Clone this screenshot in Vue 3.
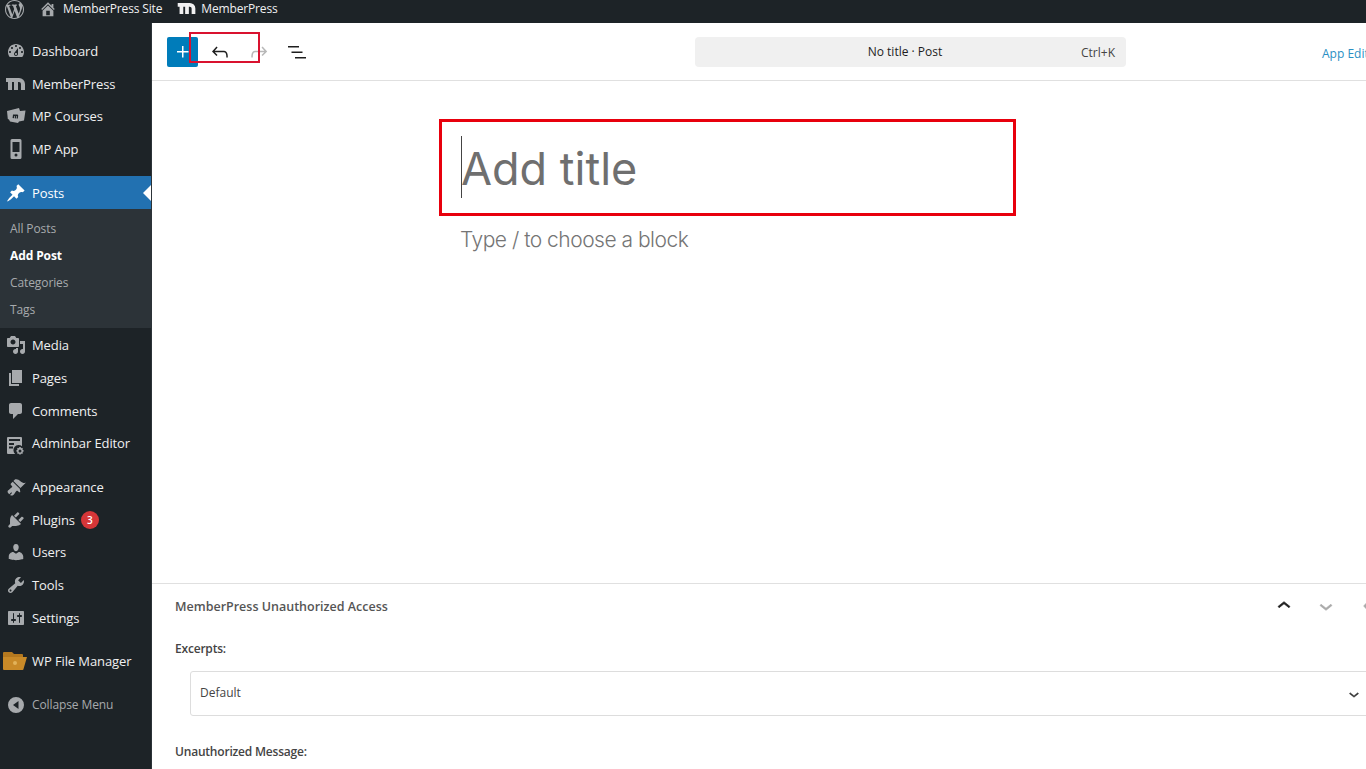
<script setup>
const P = {
  dashboard: 'M3.76 16h12.48c1.1-1.37 1.76-3.11 1.76-5 0-4.42-3.58-8-8-8s-8 3.58-8 8c0 1.89.66 3.63 1.76 5zM10 4c.55 0 1 .45 1 1s-.45 1-1 1-1-.45-1-1 .45-1 1-1zM6 6c.55 0 1 .45 1 1s-.45 1-1 1-1-.45-1-1 .45-1 1-1zm8 0c.55 0 1 .45 1 1s-.45 1-1 1-1-.45-1-1 .45-1 1-1zm-5.37 5.55L12 7v6c0 1.1-.9 2-2 2s-2-.9-2-2c0-.57.24-1.08.63-1.45zM4 10c.55 0 1 .45 1 1s-.45 1-1 1-1-.45-1-1 .45-1 1-1zm12 0c.55 0 1 .45 1 1s-.45 1-1 1-1-.45-1-1 .45-1 1-1zm-5 3c0-.55-.45-1-1-1s-1 .45-1 1 .45 1 1 1 1-.45 1-1z',
  member: 'M0 4h13a6 6 0 0 1 6 6v6h-4v-6a2 2 0 0 0-2-2h-1v8H8V8H6v8H2V8H0z',
  courses: 'M1 5l12-3 1 3 5.500-.5-1.500 10L13 15.500l-1 1.500-8-1.500L3 13.500l-1.200-.5zM7 8.500l-.4 3.500 1.300.2.3-2.300h.7l-.2 2.400 1.200.1.200-2.400h.7l-.2 2.500 1.300.1.300-3.300-.7-.8z',
  app: 'M6 0h8a1.500 1.500 0 0 1 1.500 1.500v17A1.500 1.500 0 0 1 14 20H6a1.500 1.500 0 0 1-1.500-1.500v-17A1.500 1.500 0 0 1 6 0zm.5 3v10h7V3zM10 14.500a1.500 1.500 0 1 0 0 3 1.500 1.500 0 0 0 0-3z',
  pin: 'M10.44 3.02l1.82-1.82 6.36 6.35-1.83 1.82c-1.05-.68-2.48-.57-3.41.36l-.75.75c-.92.93-1.04 2.35-.35 3.41l-1.83 1.82-2.41-2.41-2.8 2.79c-.42.42-3.38 2.71-3.8 2.29s1.86-3.39 2.28-3.81l2.79-2.79L4.1 9.36l1.83-1.82c1.05.69 2.48.57 3.4-.36l.75-.75c.93-.92 1.05-2.35.36-3.41z',
  media: 'M13 11V4c0-.55-.45-1-1-1h-1.67L9 1H5L3.67 3H2c-.55 0-1 .45-1 1v7c0 .55.45 1 1 1h10c.55 0 1-.45 1-1zM7 4.5c1.38 0 2.5 1.12 2.5 2.5S8.38 9.5 7 9.5 4.5 8.38 4.5 7 5.62 4.5 7 4.5zM14 6h5v10.5c0 1.38-1.12 2.5-2.5 2.5S14 17.88 14 16.5s1.12-2.5 2.5-2.5c.17 0 .34.02.5.05V9h-3V6zm-4 8.05V13h2v3.5c0 1.38-1.12 2.5-2.5 2.5S7 17.88 7 16.5 8.12 14 9.5 14c.17 0 .34.02.5.05z',
  pages: 'M6 15V2h10v13H6zm-1 1h8v2H3V5h2v11z',
  comments: 'M5 2h9c1.1 0 2 .9 2 2v7c0 1.1-.9 2-2 2h-2l-5 5v-5H5c-1.100 0-2-.9-2-2V4c0-1.100.9-2 2-2z',
  adminbar: 'M2 1h13a1 1 0 0 1 1 1v8.200a5 5 0 0 0-6.800 7.800H2a1 1 0 0 1-1-1V2a1 1 0 0 1 1-1zm1 2v2h11V3zm0 4v2h5V7zm0 3.500v2h4v-2zM13.300 11h1.400l.3 1.200 1-.4 1 1-.6 1 1.200.4v1.400l-1.200.3.6 1.100-1 1-1-.6-.3 1.200h-1.400l-.3-1.200-1 .6-1-1 .6-1.100-1.200-.3v-1.400l1.200-.4-.6-1 1-1 1 .4zm.7 2.500a1.500 1.500 0 1 0 0 3 1.500 1.500 0 0 0 0-3z',
  appearance: 'M14.48 11.06L7.41 3.99l1.5-1.5c.5-.56 2.3-.47 3.51.32 1.21.8 1.43 1.28 2.91 2.1 1.18.64 2.45 1.26 4.45.85zm-.71.71L6.7 4.7 4.93 6.47c-.39.39-.39 1.02 0 1.41l1.06 1.06c.39.39.39 1.03 0 1.42-.6.6-1.43 1.11-2.21 1.69-.35.26-.7.53-1.01.84C1.43 13.23.91 15 2.73 16.83c.18.18.37.36.56.52l1.8-1.8c.2-.2.51-.2.71 0s.2.51 0 .71l-1.71 1.71c1.76 1.14 3.29.48 4.67-1.8.52-.78 1.04-1.61 1.64-2.21.39-.39 1.03-.39 1.42 0l1.06 1.06c.39.39 1.02.39 1.41 0z',
  plugins: 'M13.11 4.36L9.87 7.6 8 5.73l3.24-3.24c.35-.34 1.05-.2 1.56.32.52.51.66 1.21.31 1.55zm-8 1.77l.91-1.12 9.01 9.01-1.19.84c-.71.71-2.63 1.16-3.82 1.16H6.14L4.9 17.26c-.59.59-1.54.59-2.12 0-.59-.58-.59-1.53 0-2.12l1.24-1.24v-3.88c0-1.13.4-3.19 1.09-3.89zm7.26 3.97l3.24-3.24c.34-.35 1.04-.21 1.55.31.52.51.66 1.21.31 1.55l-3.24 3.25z',
  users: 'M10 9.25c-2.27 0-2.73-3.44-2.73-3.44C7 4.02 7.82 2 9.97 2c2.16 0 2.98 2.02 2.71 3.81 0 0-.41 3.44-2.68 3.44zm0 2.57L12.72 10c2.39 0 4.52 2.33 4.52 4.53v2.49s-3.65 1.13-7.24 1.13c-3.65 0-7.24-1.13-7.24-1.13v-2.49c0-2.25 1.94-4.48 4.47-4.48z',
  tools: 'M16.68 9.77c-1.34 1.34-3.3 1.67-4.95.99l-5.41 6.52c-.99.99-2.59.99-3.58 0s-.99-2.59 0-3.57l6.52-5.42c-.68-1.65-.35-3.61.99-4.95 1.28-1.28 3.12-1.62 4.72-1.06l-2.89 2.89 2.82 2.82 2.86-2.87c.53 1.58.18 3.39-1.08 4.65zM3.81 16.21c.4.39 1.04.39 1.43 0 .4-.4.4-1.04 0-1.43-.39-.4-1.03-.4-1.43 0-.39.39-.39 1.03 0 1.43z',
  settings: 'M18 16V4c0-.55-.45-1-1-1H3c-.55 0-1 .45-1 1v12c0 .55.45 1 1 1h14c.55 0 1-.45 1-1zM8 11h1c.55 0 1 .45 1 1s-.45 1-1 1H8v1.500c0 .28-.22.5-.5.5s-.5-.22-.5-.5V13H6c-.55 0-1-.45-1-1s.45-1 1-1h1V5.500c0-.28.22-.5.5-.5s.5.22.5.5V11zm5-2h-1c-.55 0-1-.45-1-1s.45-1 1-1h1V5.500c0-.28.22-.5.5-.5s.5.22.5.5V7h1c.55 0 1 .45 1 1s-.45 1-1 1h-1v5.500c0 .28-.22.5-.5.5s-.5-.22-.5-.5V9z',
  collapse: 'M10 2a8 8 0 1 1 0 16 8 8 0 0 1 0-16zm2.500 4L7 10l5.500 4z',
}
const groups = [
  [
    { label: 'Dashboard', icon: P.dashboard },
    { label: 'MemberPress', icon: P.member },
    { label: 'MP Courses', icon: P.courses },
    { label: 'MP App', icon: P.app },
  ],
  [
    { label: 'Posts', icon: P.pin, current: true, sub: ['All Posts', 'Add Post', 'Categories', 'Tags'] },
    { label: 'Media', icon: P.media },
    { label: 'Pages', icon: P.pages },
    { label: 'Comments', icon: P.comments },
    { label: 'Adminbar Editor', icon: P.adminbar, low: true },
  ],
  [
    { label: 'Appearance', icon: P.appearance },
    { label: 'Plugins', icon: P.plugins, badge: 3 },
    { label: 'Users', icon: P.users },
    { label: 'Tools', icon: P.tools },
    { label: 'Settings', icon: P.settings },
  ],
]
</script>

<template>
  <div class="page">
    <header class="adminbar">
      <svg class="wp" viewBox="0 0 20 20"><path d="M20 10c0-5.510-4.490-10-10-10C4.480 0 0 4.490 0 10c0 5.520 4.480 10 10 10 5.510 0 10-4.480 10-10zM7.780 15.370L4.370 6.220c.55-.02 1.170-.08 1.170-.08.5-.06.44-1.130-.06-1.110 0 0-1.450.11-2.370.11-.18 0-.37 0-.58-.01C4.120 2.690 6.870 1.110 10 1.110c2.330 0 4.450.87 6.050 2.340-.68-.11-1.650.39-1.650 1.580 0 .74.45 1.360.9 2.100.35.61.55 1.360.55 2.460 0 1.490-1.400 5-1.400 5l-3.030-8.370c.54-.02.82-.17.82-.17.5-.05.44-1.250-.06-1.220 0 0-1.440.12-2.380.12-.87 0-2.330-.12-2.330-.12-.5-.03-.56 1.200-.06 1.220l.92.08 1.260 3.410zM17.410 10c.24-.64.74-1.870.43-4.250.7 1.290 1.050 2.710 1.050 4.250 0 3.290-1.730 6.240-4.400 7.780.97-2.590 1.940-5.200 2.920-7.780zM6.100 18.090C3.120 16.650 1.110 13.530 1.110 10c0-1.300.23-2.480.72-3.590C3.250 10.300 4.670 14.200 6.100 18.090zm4.030-6.630l2.580 6.980c-.86.29-1.760.45-2.710.45-.79 0-1.570-.11-2.290-.33.81-2.380 1.620-4.740 2.420-7.100z"/></svg>
      <svg class="home" viewBox="0 0 20 20"><path d="M16 8.500l1.530 1.530-1.060 1.060L10 4.620l-6.470 6.470-1.060-1.060L10 2.500l4 4v-2h2v4zm-6-2.460l6 5.990V18H4v-5.970zM12 17v-5H8v5h4z"/></svg>
      <span class="bar-text">MemberPress Site</span>
      <svg class="mp-logo" viewBox="0 3 20 14"><path :d="P.member"/></svg>
      <span class="bar-text">MemberPress</span>
    </header>

    <div class="body">
      <aside class="sidebar">
        <nav v-for="(group, g) in groups" :key="g" class="group">
          <template v-for="item in group" :key="item.label">
            <div class="item" :class="{ current: item.current }">
              <svg class="mi" :class="{ low: item.low }" viewBox="0 0 20 20"><path :d="item.icon"/></svg>
              <span>{{ item.label }}</span>
              <span v-if="item.badge" class="badge">{{ item.badge }}</span>
              <i v-if="item.current" class="notch"></i>
            </div>
            <ul v-if="item.sub" class="sub">
              <li v-for="s in item.sub" :key="s" :class="{ on: s === 'Add Post' }">{{ s }}</li>
            </ul>
          </template>
        </nav>
        <div class="item group">
          <svg class="mi folder" viewBox="0 0 24 20">
            <path fill="#b5791f" d="M0 2a1 1 0 0 1 1-1h8l2 2h8a1 1 0 0 1 1 1v3H0z"/>
            <path fill="#c98a28" d="M0 6h24l-3.500 12a1 1 0 0 1-1 1H1a1 1 0 0 1-1-1z"/>
            <circle cx="12" cy="12" r="2" fill="#e2b35a"/>
          </svg>
          <span>WP File Manager</span>
        </div>
        <div class="item group collapse">
          <svg class="mi" viewBox="0 0 20 20"><path :d="P.collapse"/></svg>
          <span>Collapse Menu</span>
        </div>
      </aside>

      <main class="main">
        <div class="toolbar">
          <button class="add">
            <svg viewBox="0 0 24 24"><path d="M11 12.500V17.500H12.500V12.500H17.500V11H12.500V6H11V11H6V12.500H11Z"/></svg>
          </button>
          <svg class="tool" viewBox="0 0 24 24"><path d="M18.300 11.700c-.6-.6-1.400-.9-2.300-.9H6.700l2.900-3.300-1.100-1-4.500 5L8.500 16l1-1-2.700-2.700H16c.5 0 .9.2 1.300.5 1 1 1 3.400 1 4.500v.3h1.500v-.2c0-1.500 0-4.300-1.500-5.700z"/></svg>
          <svg class="tool off" viewBox="0 0 24 24"><path d="M15.600 6.500l-1.100 1 2.900 3.300H8c-.9 0-1.700.3-2.300.9-1.400 1.500-1.400 4.200-1.400 5.600v.2h1.500v-.3c0-1.100 0-3.500 1-4.500.3-.3.7-.5 1.300-.5h9.200L14.500 15l1.100 1.100 4.600-4.600-4.600-5z"/></svg>
          <svg class="tool list" viewBox="0 0 24 24"><path d="M3 6h11v1.500H3V6zm3.500 5.500h11V13h-11v-1.500zM21 17H10v1.500h11V17z"/></svg>
          <div class="command">
            <span class="cmd-title">No title · Post</span>
            <span class="cmd-key">Ctrl+K</span>
          </div>
          <span class="app-edit">App Edit</span>
          <i class="mark-small"></i>
        </div>

        <section class="canvas">
          <div class="column">
            <div class="title-wrap">
              <i class="mark-large"></i>
              <h1 class="title"><i class="caret"></i>Add title</h1>
            </div>
            <p class="hint">Type / to choose a block</p>
          </div>
        </section>

        <section class="meta">
          <div class="meta-head">
            <h2>MemberPress Unauthorized Access</h2>
            <div class="meta-tools">
              <svg viewBox="0 0 24 24"><path d="M6.500 12.400L12 8l5.500 4.400-.9 1.200L12 10l-4.500 3.600-1-1.200z"/></svg>
              <svg class="off" viewBox="0 0 24 24"><path d="M17.500 11.600L12 16l-5.500-4.400.9-1.200L12 14l4.500-3.600 1 1.200z"/></svg>
              <svg class="off" viewBox="0 0 24 24"><path d="M14.600 7l-1.200-1L8 12l5.400 6 1.200-1-4.600-5z"/></svg>
            </div>
          </div>
          <label class="field">Excerpts:</label>
          <div class="select">
            <span>Default</span>
            <svg viewBox="0 0 24 24"><path d="M17.500 11.600L12 16l-5.500-4.400.9-1.200L12 14l4.500-3.600 1 1.200z"/></svg>
          </div>
          <label class="field second">Unauthorized Message:</label>
        </section>
      </main>
    </div>
  </div>
</template>

<style>
html, body { margin: 0; height: 100%; overflow: hidden; background: #fff; }
</style>

<style scoped>
.page {
  width: 1366px;
  height: 769px;
  display: flex;
  flex-direction: column;
  overflow: hidden;
  font-family: "Open Sans", "Noto Sans", sans-serif;
}
.adminbar {
  height: 23px;
  flex: none;
  background: #1d2327;
  display: flex;
  align-items: center;
  color: #f0f0f1;
  font-size: 12px;
  letter-spacing: -0.15px;
}
.adminbar svg { fill: #a7aaad; flex: none; }
.wp { width: 19px; height: 19px; margin-left: 5px; margin-top: -4px; }
.home { width: 18px; height: 18px; margin-left: 15px; margin-top: -5px; }
.bar-text { margin-top: -7px; white-space: nowrap; }
.home + .bar-text { margin-left: 6px; }
.adminbar .mp-logo { width: 20px; height: 13px; margin-left: 15px; margin-right: 4px; margin-top: -7px; fill: #f0f0f1; }

.body { flex: 1; display: flex; min-height: 0; }

.sidebar {
  width: 152px;
  flex: none;
  background: #1d2327;
  padding-top: 11.6px;
  box-sizing: border-box;
  color: #f0f0f1;
  font-size: 13px;
  letter-spacing: -0.1px;
  border-right: 1px solid #2c3338;
}
.group { margin-bottom: 10.9px; }
.item {
  position: relative;
  height: 32.67px;
  display: flex;
  align-items: center;
  white-space: nowrap;
}
.item > span:first-of-type { margin-left: 6px; }
.mi { width: 20px; height: 20px; margin-left: 6px; fill: #a7aaad; flex: none; }
.mi.low { transform: translateY(3px); }
.current { background: #2271b1; color: #fff; height: 33px; }
.current > span { padding-top: 1px; }
.current .mi { fill: #fff; }
.notch {
  position: absolute;
  right: 0;
  top: 9px;
  border: 8px solid transparent;
  border-right-color: #fff;
  border-left-width: 0;
}
.sub {
  list-style: none;
  margin: 0 0 1px;
  padding: 6px 0 0;
  background: #2c3338;
  height: 119px;
  box-sizing: border-box;
  color: #a7aaad;
  font-size: 12px;
}
.sub li { height: 27px; line-height: 27px; padding-left: 10px; }
.sub .on { color: #fff; font-weight: 700; }
.badge {
  margin-left: 6px;
  width: 18px;
  height: 18px;
  border-radius: 50%;
  background: #d63638;
  color: #fff;
  font-size: 10px;
  font-weight: 600;
  line-height: 18px;
  text-align: center;
}
.folder { width: 24px; height: 22px; margin-left: 3px; }
.item > .folder + span { margin-left: 5px; }
.collapse { color: #a7aaad; font-size: 12px; }

.main { flex: 1; min-width: 0; display: flex; flex-direction: column; background: #fff; }

.toolbar {
  position: relative;
  height: 58px;
  flex: none;
  box-sizing: border-box;
  border-bottom: 1px solid #e0e0e0;
  display: flex;
  align-items: center;
  padding-left: 15px;
  padding-top: 1px;
}
.add {
  width: 31px;
  height: 30px;
  padding: 0;
  border: 0;
  border-radius: 2px;
  background: #007cba;
  display: flex;
  align-items: center;
  justify-content: center;
}
.add svg { width: 24px; height: 24px; fill: #fff; }
.tool { width: 24px; height: 24px; fill: #1e1e1e; flex: none; margin-left: 15px; }
.add + .tool { margin-left: 10px; }
.tool.off { fill: #b8b8b8; }
.tool.list { margin-left: 14px; }
.command {
  position: absolute;
  left: 543px;
  top: 14px;
  width: 431px;
  height: 30px;
  box-sizing: border-box;
  padding-right: 11px;
  border-radius: 4px;
  background: #f0f0f0;
  display: flex;
  align-items: center;
  justify-content: center;
  font-size: 12px;
  color: #1e1e1e;
}
.cmd-title { margin-top: -2px; }
.cmd-key { position: absolute; right: 11px; color: #444; }
.app-edit {
  position: absolute;
  left: 1170px;
  top: 22px;
  font-size: 12px;
  color: #2a8fc4;
  white-space: nowrap;
}
.mark-small {
  position: absolute;
  left: 37px;
  top: 9px;
  width: 71px;
  height: 31px;
  box-sizing: border-box;
  border: 2px solid #d9122f;
  pointer-events: none;
}

.canvas { flex: 1; min-height: 0; }
.column { margin-left: 309px; width: 600px; padding-top: 38px; }
.title-wrap { position: relative; height: 97px; }
.title {
  position: relative;
  margin: 0;
  padding-top: 20px;
  font-family: Inter, sans-serif;
  font-size: 45px;
  font-weight: 400;
  line-height: 60px;
  color: #6f6f6f;
}
.caret {
  position: absolute;
  left: 0;
  top: 17px;
  width: 1px;
  height: 62px;
  background: #444;
}
.mark-large {
  position: absolute;
  left: -22px;
  top: 0;
  width: 577px;
  height: 97px;
  box-sizing: border-box;
  border: 3px solid #e8000d;
  pointer-events: none;
}
.hint {
  margin: 10px 0 0 -1px;
  font-family: Inter, sans-serif;
  font-size: 21px;
  font-weight: 300;
  letter-spacing: -0.5px;
  line-height: 28px;
  color: #757575;
}

.meta {
  height: 186px;
  flex: none;
  box-sizing: border-box;
  border-top: 1px solid #e0e0e0;
  padding-left: 23px;
  font-size: 12px;
  color: #444;
  overflow: hidden;
}
.meta-head { height: 45px; display: flex; align-items: center; position: relative; }
.meta-head h2 { margin: 0; font-size: 12.5px; font-weight: 600; color: #555; white-space: nowrap; }
.meta-tools {
  position: absolute;
  left: 1096px;
  top: 9px;
  display: flex;
  gap: 16px;
}
.meta-tools svg { width: 26px; height: 26px; fill: #1e1e1e; stroke: #1e1e1e; stroke-width: .6; flex: none; }
.meta-tools .off { fill: #a9a9a9; stroke: #a9a9a9; }
.field { display: block; font-weight: 600; letter-spacing: -0.2px; line-height: 18px; margin-top: 11px; }
.select {
  margin: 13px 0 0 15px;
  height: 45px;
  width: 1300px;
  box-sizing: border-box;
  border: 1px solid #ddd;
  border-radius: 3px;
  display: flex;
  align-items: center;
  padding-left: 9px;
  padding-bottom: 2px;
  position: relative;
  color: #444;
}
.select svg { position: absolute; left: 1153px; top: 12px; width: 20px; height: 20px; fill: #333; stroke: #333; stroke-width: .5; }
.field.second { margin-top: 27px; }
</style>
